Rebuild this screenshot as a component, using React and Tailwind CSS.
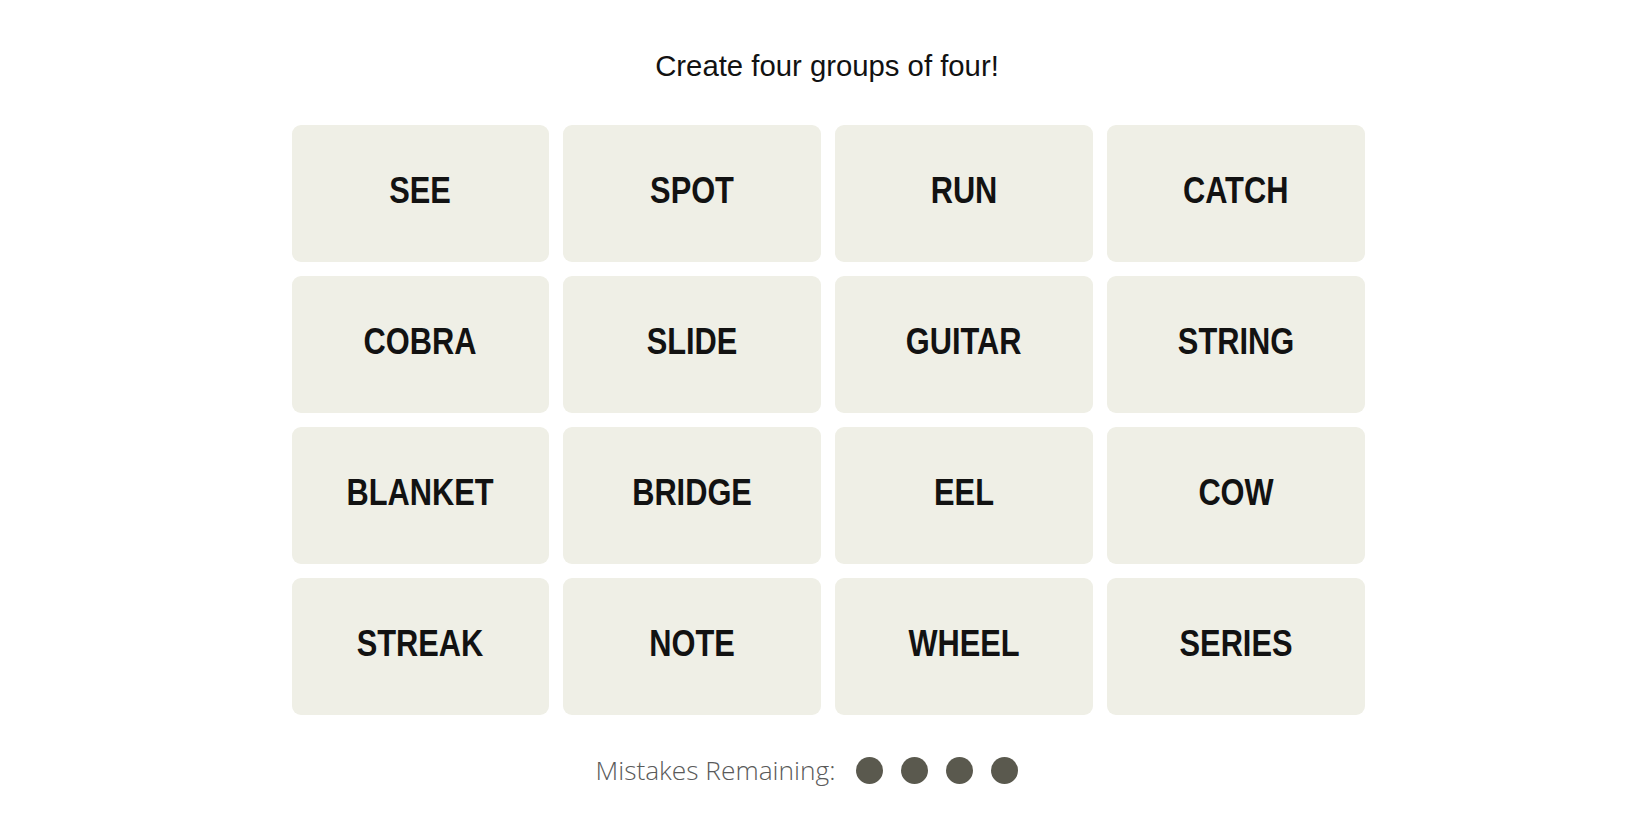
const words = [
    "SEE", "SPOT", "RUN", "CATCH",
    "COBRA", "SLIDE", "GUITAR", "STRING",
    "BLANKET", "BRIDGE", "EEL", "COW",
    "STREAK", "NOTE", "WHEEL", "SERIES",
];

function Tile({ word }) {
    return (
        <div className="h-[137px] pb-[5px] rounded-[9px] bg-[#efefe6] flex items-center justify-center">
            <span className="inline-block scale-x-[0.855] text-[36px] font-bold leading-none text-[#121212] font-['Liberation_Sans',Arial,sans-serif]">
                {word}
            </span>
        </div>
    );
}

export default function App() {
    return (
        <div className="min-h-[825px] w-full bg-white">
            <div className="pt-[49px] pl-[4px] text-center text-[29.3px] leading-[34px] text-[#121212] font-['Liberation_Sans',Arial,sans-serif]">
                Create four groups of four!
            </div>

            <div className="mt-[42px] flex justify-center pl-[6px]">
                <div className="grid w-[1073px] grid-cols-4 gap-[14px]">
                    {words.map((w) => (
                        <Tile key={w} word={w} />
                    ))}
                </div>
            </div>

            <div className="mt-[42px] flex items-center justify-center pr-[36px]">
                <span className="text-[26.3px] font-light leading-none text-[#5a5a5a] font-['Open_Sans',sans-serif]">
                    Mistakes Remaining:
                </span>
                <div className="ml-[21px] flex gap-[18px]">
                    {[0, 1, 2, 3].map((i) => (
                        <span key={i} className="block h-[27px] w-[27px] rounded-full bg-[#5a594e]" />
                    ))}
                </div>
            </div>
        </div>
    );
}
